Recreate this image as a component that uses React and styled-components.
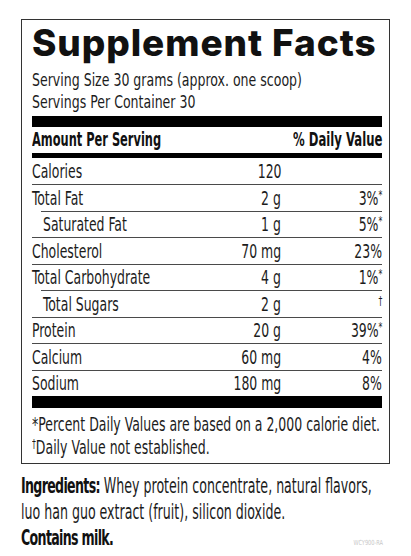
import React from "react";
import styled, { createGlobalStyle } from "styled-components";

const GlobalStyle = createGlobalStyle`
  html, body {
    margin: 0;
    background: #fff;
    overflow-x: hidden;
  }
`;

const NARROW = `"DejaVu Sans Condensed", "Liberation Sans", sans-serif`;

const Page = styled.div`
  width: 411px;
  box-sizing: border-box;
  padding: 19px 0 0 21px;
  overflow: hidden;
  color: #1c1c1c;
  font-family: ${NARROW};
`;

const Panel = styled.div`
  width: 369px;
  box-sizing: border-box;
  border: 1px solid #333;
  padding: 0 7px 5px 10px;
`;

const Title = styled.h1`
  margin: 0;
  font-family: Inter, "Liberation Sans", sans-serif;
  font-weight: 800;
  font-size: 37px;
  line-height: 46px;
  letter-spacing: 0.9px;
  color: #111;
`;

// label type is a tall, very condensed face: squeeze the text horizontally
const Squeeze = styled.span`
  display: inline-block;
  white-space: nowrap;
  transform: scaleX(${p => p.$scale || 0.71});
  transform-origin: ${p => p.$origin || "left"} center;
`;

const Line = styled.div`
  overflow: hidden;
  text-align: ${p => p.$align || "left"};
`;

const Serving = styled.div`
  margin-top: 3px;
  font-size: 18.5px;
  line-height: 22px;
`;

const Bar = styled.div`
  height: ${p => p.$h}px;
  margin-top: ${p => p.$mt || 0}px;
  background: #000;
`;

const HeadRow = styled.div`
  margin-top: 2px;
  display: flex;
  justify-content: space-between;
  font-weight: 700;
  font-size: 19.5px;
  line-height: 22px;
  color: #111;
`;

const Row = styled.div`
  display: grid;
  grid-template-columns: 1fr 70px 101px;
  align-items: end;
  box-sizing: border-box;
  height: ${p => (p.$first ? 26 : 26.5)}px;
  padding-bottom: 1px;
  margin-left: ${p => (p.$indent ? 9 : 0)}px;
  border-top: ${p => (p.$first ? "none" : "1px solid #4a4a4a")};
  font-size: 19.5px;
  line-height: 22px;
`;

const Label = styled.div`
  padding-left: ${p => (p.$indent ? 2 : 0)}px;
`;

const Num = styled.div`
  text-align: right;
`;

const Sup = styled.span`
  font-size: 0.62em;
  vertical-align: 0.5em;
  line-height: 0;
`;

const Notes = styled.div`
  margin-top: 5px;
  font-size: 19px;
  line-height: 22.5px;
`;

const Ingredients = styled.div`
  width: 369px;
  box-sizing: border-box;
  padding: 0 7px 0 0;
  margin-top: 8.5px;
  font-size: 21px;
  line-height: 26px;
`;

const Bold = styled.b`
  font-weight: 700;
  letter-spacing: -1px;
  color: #111;
`;

const LastLine = styled.div`
  display: flex;
  justify-content: space-between;
  align-items: baseline;
`;

const Code = styled.span`
  font-size: 7px;
  color: #c8c8c8;
`;

const rows = [
  { label: "Calories", amount: "120", dv: "" },
  { label: "Total Fat", amount: "2 g", dv: "3%", mark: "*" },
  { label: "Saturated Fat", amount: "1 g", dv: "5%", mark: "*", indent: true },
  { label: "Cholesterol", amount: "70 mg", dv: "23%" },
  { label: "Total Carbohydrate", amount: "4 g", dv: "1%", mark: "*" },
  { label: "Total Sugars", amount: "2 g", dv: "", mark: "\u2020", indent: true },
  { label: "Protein", amount: "20 g", dv: "39%", mark: "*" },
  { label: "Calcium", amount: "60 mg", dv: "4%" },
  { label: "Sodium", amount: "180 mg", dv: "8%" },
];

export default function App() {
  return (
    <Page>
      <GlobalStyle />
      <Panel>
        <Title>Supplement Facts</Title>
        <Serving>
          <Line><Squeeze $scale={0.754}>Serving Size 30 grams (approx. one scoop)</Squeeze></Line>
          <Line><Squeeze $scale={0.754}>Servings Per Container 30</Squeeze></Line>
        </Serving>
        <Bar $h={11} $mt={3} />
        <HeadRow>
          <Squeeze $scale={0.65}>Amount Per Serving</Squeeze>
          <Squeeze $scale={0.665} $origin="right">% Daily Value</Squeeze>
        </HeadRow>
        <Bar $h={5} $mt={2} />
        {rows.map((r, i) => (
          <Row key={r.label} $first={i === 0} $indent={r.indent}>
            <Label $indent={r.indent}>
              <Squeeze>{r.label}</Squeeze>
            </Label>
            <Num>
              <Squeeze $origin="right">{r.amount}</Squeeze>
            </Num>
            <Num>
              <Squeeze $origin="right">
                {r.dv}
                {r.mark && <Sup>{r.mark}</Sup>}
              </Squeeze>
            </Num>
          </Row>
        ))}
        <Bar $h={12} />
        <Notes>
          <Line><Squeeze $scale={0.731}>*Percent Daily Values are based on a 2,000 calorie diet.</Squeeze></Line>
          <Line><Squeeze $scale={0.731}><Sup>{"\u2020"}</Sup>Daily Value not established.</Squeeze></Line>
        </Notes>
      </Panel>
      <Ingredients>
        <Line>
          <Squeeze $scale={0.667}>
            <Bold>Ingredients:</Bold> Whey protein concentrate, natural flavors,
          </Squeeze>
        </Line>
        <Line>
          <Squeeze $scale={0.667}>luo han guo extract (fruit), silicon dioxide.</Squeeze>
        </Line>
        <LastLine>
          <Squeeze $scale={0.667}><Bold>Contains milk.</Bold></Squeeze>
          <Squeeze $scale={0.8} $origin="right"><Code>WCY900-RA</Code></Squeeze>
        </LastLine>
      </Ingredients>
    </Page>
  );
}
